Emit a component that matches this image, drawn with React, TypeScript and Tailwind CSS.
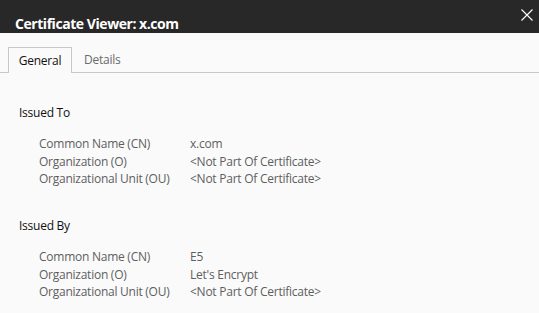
import React from "react";

const Row = ({ label, value }: { label: string; value: string }) => (
  <div className="flex h-[17.5px] items-center">
    <div className="w-[151px] shrink-0 text-[#5e5e5e]">{label}</div>
    <div className="text-[#5e5e5e]">{value}</div>
  </div>
);

const Section = ({
  title,
  rows,
}: {
  title: string;
  rows: [string, string][];
}) => (
  <div className="flex flex-col">
    <div className="flex h-[17.5px] items-center text-[#111]">{title}</div>
    <div className="mt-[14px] flex flex-col pl-[20px]">
      {rows.map(([l, v]) => (
        <Row key={l} label={l} value={v} />
      ))}
    </div>
  </div>
);

export default function App() {
  return (
    <div
      className="flex h-[313px] w-[539px] flex-col overflow-hidden bg-[#fafafa] text-[12px] tracking-[-0.25px]"
      style={{ fontFamily: '"Open Sans", "Noto Sans", sans-serif' }}
    >
      <div className="relative flex h-[33px] shrink-0 items-end bg-[#282828] px-[15px]">
        <div className="text-[14px] font-bold leading-[18px] tracking-[-0.45px] text-white">
          Certificate Viewer: x.com
        </div>
        <svg
          className="absolute right-[6px] top-[9px]"
          width="12"
          height="12"
          viewBox="0 0 12 12"
        >
          <path d="M0.5 0.5 L11.5 11.5 M11.5 0.5 L0.5 11.5" stroke="#fff" strokeWidth="1.1" />
        </svg>
      </div>
      <div className="mt-[14px] flex h-[26px] shrink-0 items-end border-b border-[#c8c8c8] pl-[8px]">
        <div className="-mb-px flex h-[26px] w-[64px] items-center justify-center border border-b-0 border-[#c8c8c8] bg-[#fafafa] pt-[1px] font-medium text-[#111]">
          General
        </div>
        <div className="flex h-[25px] items-center pl-[12px] pt-[1px] text-[#6a6a6a]">Details</div>
      </div>
      <div className="flex flex-col pl-[19px] pt-[31px]">
        <Section
          title="Issued To"
          rows={[
            ["Common Name (CN)", "x.com"],
            ["Organization (O)", "<Not Part Of Certificate>"],
            ["Organizational Unit (OU)", "<Not Part Of Certificate>"],
          ]}
        />
        <div className="h-[29px]" />
        <Section
          title="Issued By"
          rows={[
            ["Common Name (CN)", "E5"],
            ["Organization (O)", "Let's Encrypt"],
            ["Organizational Unit (OU)", "<Not Part Of Certificate>"],
          ]}
        />
      </div>
    </div>
  );
}
